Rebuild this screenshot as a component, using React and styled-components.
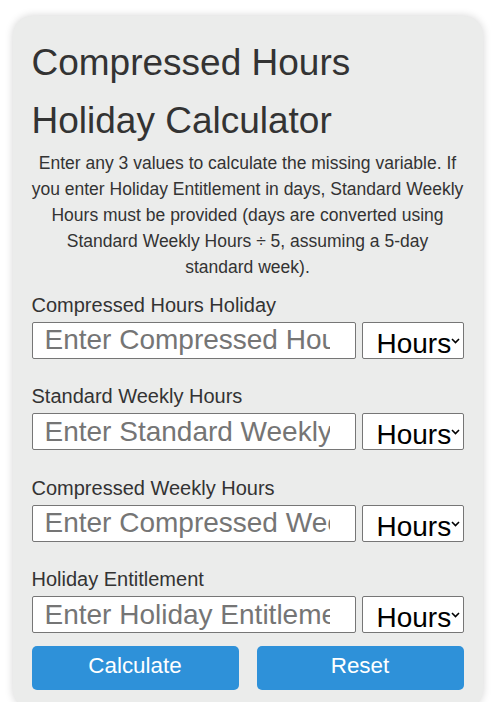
import React from "react";
import styled, { createGlobalStyle } from "styled-components";

const GlobalStyle = createGlobalStyle`
  html, body {
    margin: 0;
    padding: 0;
    background: #ffffff;
  }
  body {
    font-family: "Liberation Sans", Arial, sans-serif;
    color: #333333;
  }
  * { box-sizing: border-box; }
`;

const Card = styled.div`
  width: 470px;
  margin: 16px auto 0;
  padding: 18px 19px 19px;
  background: #ebeceb;
  border-radius: 20px;
  box-shadow: 0 0 8px rgba(0, 0, 0, 0.18);
`;

const Title = styled.h1`
  margin: 0 0 1px;
  font-size: 37px;
  font-weight: 400;
  line-height: 57.6px;
  color: #333333;
`;

const Description = styled.p`
  margin: 0 0 8.6px;
  font-size: 17.5px;
  line-height: 26px;
  text-align: center;
  color: #333333;
`;

const Group = styled.div`
  margin-bottom: ${(p) => (p.$last ? "12.5px" : "21.5px")};
`;

const Label = styled.label`
  display: block;
  margin-bottom: 1px;
  font-size: 20px;
  line-height: 32px;
  color: #333333;
`;

const Row = styled.div`
  display: flex;
  gap: 6px;
  height: 37px;
`;

const Input = styled.input`
  width: 75%;
  height: 37px;
  margin: 0;
  padding: 0 10px 0 12px;
  border: 1px solid #767676;
  border-radius: 2px;
  background: #ffffff;
  font-family: "Liberation Sans", Arial, sans-serif;
  font-size: 28px;
  color: #333333;
  outline: none;
  &::placeholder {
    color: #757575;
  }
`;

const SelectWrap = styled.div`
  position: relative;
  flex: 1;
  height: 37px;
`;

const Select = styled.select`
  appearance: none;
  -webkit-appearance: none;
  width: 100%;
  height: 37px;
  margin: 0;
  padding: 5px 0 0 14px;
  border: 1px solid #767676;
  border-radius: 2px;
  background: #ffffff;
  font-family: "Liberation Sans", Arial, sans-serif;
  font-size: 28px;
  color: #000000;
  overflow: hidden;
  outline: none;
`;

const Chevron = styled.svg`
  position: absolute;
  right: 4px;
  top: 16px;
  width: 9px;
  height: 6px;
  pointer-events: none;
`;

const Buttons = styled.div`
  display: flex;
  justify-content: space-between;
`;

const Button = styled.button`
  width: 207px;
  height: 44px;
  border: none;
  border-radius: 5px;
  background: #2e91d9;
  color: #ffffff;
  font-family: "Liberation Sans", Arial, sans-serif;
  font-size: 22.4px;
  padding: 0 0 3px;
  cursor: pointer;
`;

const fields = [
  { label: "Compressed Hours Holiday", placeholder: "Enter Compressed Hours Holiday" },
  { label: "Standard Weekly Hours", placeholder: "Enter Standard Weekly Hours" },
  { label: "Compressed Weekly Hours", placeholder: "Enter Compressed Weekly Hours" },
  { label: "Holiday Entitlement", placeholder: "Enter Holiday Entitlement" },
];

export default function App() {
  return (
    <>
      <GlobalStyle />
      <Card>
        <Title>Compressed Hours Holiday Calculator</Title>
        <Description>
          Enter any 3 values to calculate the missing variable. If you enter
          Holiday Entitlement in days, Standard Weekly Hours must be provided
          (days are converted using Standard Weekly Hours ÷ 5, assuming a
          5-day standard week).
        </Description>
        {fields.map((f, i) => (
          <Group key={f.label} $last={i === fields.length - 1}>
            <Label>{f.label}</Label>
            <Row>
              <Input type="number" placeholder={f.placeholder} />
              <SelectWrap>
                <Select defaultValue="hours">
                  <option value="hours">Hours</option>
                  <option value="days">Days</option>
                </Select>
                <Chevron viewBox="0 0 9 6">
                  <polyline
                    points="1,1 4.5,4.5 8,1"
                    fill="none"
                    stroke="#000"
                    strokeWidth="1.6"
                  />
                </Chevron>
              </SelectWrap>
            </Row>
          </Group>
        ))}
        <Buttons>
          <Button type="button">Calculate</Button>
          <Button type="button">Reset</Button>
        </Buttons>
      </Card>
    </>
  );
}
